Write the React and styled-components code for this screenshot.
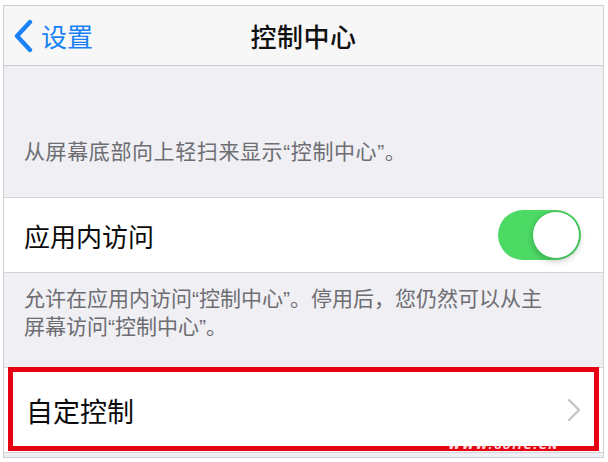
import React from "react";
import styled, { createGlobalStyle } from "styled-components";

const Global = createGlobalStyle`
  html, body { margin: 0; padding: 0; background: #ffffff; }
  body { font-family: "Noto Sans CJK SC", "Noto Sans", sans-serif; }
`;

const Page = styled.div`
  width: 608px;
  height: 462px;
  padding: 5px 4px 6px 3px;
  box-sizing: border-box;
  background: #ffffff;
`;

const Frame = styled.div`
  height: 100%;
  border: 1px solid #cfcfd2;
  background: #efeff4;
  display: flex;
  flex-direction: column;
  overflow: hidden;
  position: relative;
`;

const NavBar = styled.div`
  height: 59px;
  flex: none;
  background: #f7f7f8;
  border-bottom: 1px solid #c9c9cd;
  display: grid;
  grid-template-columns: 1fr auto 1fr;
  align-items: center;
`;

const Back = styled.div`
  display: flex;
  align-items: center;
  gap: 7px;
  padding-left: 8px;
  color: #1a82f7;
  font-size: 26px;
  line-height: 1;
`;

const Title = styled.div`
  font-size: 26px;
  font-weight: 500;
  color: #111;
  letter-spacing: 0.5px;
`;

const Footer = styled.div`
  color: #6d6d72;
  font-size: 21px;
  line-height: 27px;
  letter-spacing: ${(p) => p.$ls || 0}px;
  padding: ${(p) => p.$pad};
  height: ${(p) => p.$h}px;
  box-sizing: border-box;
  display: flex;
  flex-direction: column;
  justify-content: ${(p) => p.$justify || "flex-start"};
  flex: none;
`;

const Q = styled.span`
  font-family: "Liberation Sans", sans-serif;
  font-size: 21px;
`;

const Row = styled.div`
  height: ${(p) => p.$h}px;
  flex: none;
  background: #ffffff;
  border-top: 1px solid #d3d3d8;
  border-bottom: 1px solid #d3d3d8;
  box-sizing: border-box;
  display: flex;
  align-items: center;
  justify-content: space-between;
  padding: 0 22px 0 ${(p) => p.$pl || 20}px;
  position: relative;
`;

const Label = styled.div`
  font-size: ${(p) => p.$size || 26}px;
  color: #0a0a0a;
`;

const Toggle = styled.div`
  width: 83px;
  height: 50px;
  border-radius: 25px;
  background: #4cd964;
  position: relative;
`;

const Knob = styled.div`
  position: absolute;
  right: 1px;
  top: 1px;
  width: 46px;
  height: 46px;
  border-radius: 50%;
  background: #fff;
  border: 1px solid #3cbf55;
  box-shadow: 0 3px 6px rgba(0, 0, 0, 0.18);
`;

const Highlight = styled.div`
  position: absolute;
  left: 4px;
  right: 4px;
  top: -1px;
  bottom: 1px;
  border: 5px solid #e60012;
  pointer-events: none;
`;

const Watermark = styled.div`
  position: absolute;
  right: 44px;
  bottom: 0px;
  font-family: "DejaVu Sans", sans-serif;
  font-size: 11px;
  font-style: italic;
  font-weight: bold;
  color: rgba(255, 255, 255, 0.85);
  letter-spacing: 1.5px;
  line-height: 12px;
`;

const Filler = styled.div`
  flex: 1;
`;

export default function App() {
  return (
    <>
      <Global />
      <Page>
        <Frame>
          <NavBar>
            <Back>
              <svg width="22" height="34" viewBox="0 0 22 34">
                <path
                  d="M18 3 L5 17 L18 31"
                  fill="none"
                  stroke="#1a82f7"
                  strokeWidth="4.4"
                  strokeLinecap="round"
                  strokeLinejoin="round"
                />
              </svg>
              <span>设置</span>
            </Back>
            <Title>控制中心</Title>
            <div />
          </NavBar>
          <Footer $h={131} $pad="0 20px 32px" $justify="flex-end" $ls={0.6}>
            <span>
              从屏幕底部向上轻扫来显示<Q>“</Q>控制中心<Q>”</Q>。
            </span>
          </Footer>
          <Row $h={76}>
            <Label>应用内访问</Label>
            <Toggle>
              <Knob />
            </Toggle>
          </Row>
          <Footer $h={94} $pad="11px 20px 0">
            <span>
              允许在应用内访问<Q>“</Q>控制中心<Q>”</Q>。停用后，您仍然可以从主
            </span>
            <span>
              屏幕访问<Q>“</Q>控制中心<Q>”</Q>。
            </span>
          </Footer>
          <Row $h={86} $pl={22}>
            <Label $size={27}>自定控制</Label>
            <svg width="14" height="24" viewBox="0 0 14 24">
              <path
                d="M2 2 L12 12 L2 22"
                fill="none"
                stroke="#c4c4c9"
                strokeWidth="2.4"
                strokeLinecap="round"
                strokeLinejoin="round"
              />
            </svg>
            <Highlight />
            <Watermark>WWW.68IIC.CN</Watermark>
          </Row>
          <Filler />
        </Frame>
      </Page>
    </>
  );
}
